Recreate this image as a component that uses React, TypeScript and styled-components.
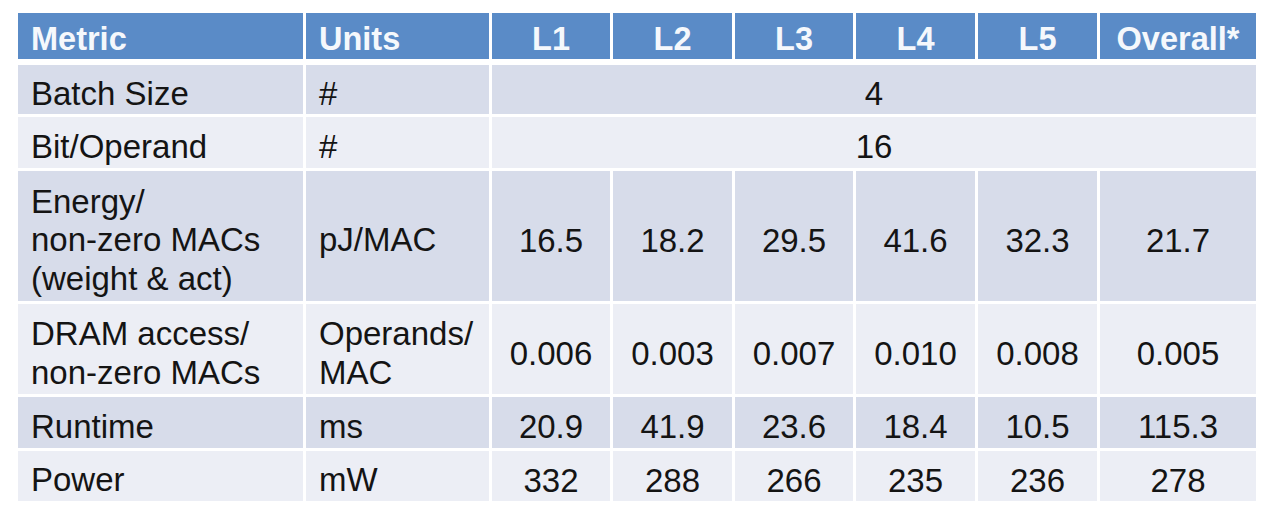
import React from 'react'
import styled, { createGlobalStyle } from 'styled-components'

const GlobalStyle = createGlobalStyle`
  html, body {
    margin: 0;
    padding: 0;
    background: #ffffff;
  }
  body {
    font-family: "Liberation Sans", Arial, sans-serif;
  }
`

type Row = {
  metric: string[]
  units: string[]
  values: string[]
  band: 'odd' | 'even'
}

const layers = ['L1', 'L2', 'L3', 'L4', 'L5', 'Overall*']

const rows: Row[] = [
  { metric: ['Batch Size'], units: ['#'], values: ['4'], band: 'odd' },
  { metric: ['Bit/Operand'], units: ['#'], values: ['16'], band: 'even' },
  {
    metric: ['Energy/', 'non-zero MACs', '(weight & act)'],
    units: ['pJ/MAC'],
    values: ['16.5', '18.2', '29.5', '41.6', '32.3', '21.7'],
    band: 'odd',
  },
  {
    metric: ['DRAM access/', 'non-zero MACs'],
    units: ['Operands/', 'MAC'],
    values: ['0.006', '0.003', '0.007', '0.010', '0.008', '0.005'],
    band: 'even',
  },
  {
    metric: ['Runtime'],
    units: ['ms'],
    values: ['20.9', '41.9', '23.6', '18.4', '10.5', '115.3'],
    band: 'odd',
  },
  {
    metric: ['Power'],
    units: ['mW'],
    values: ['332', '288', '266', '235', '236', '278'],
    band: 'even',
  },
]

export default function App() {
  return (
    <Page>
      <GlobalStyle />
      <Table>
        <HeadCell>Metric</HeadCell>
        <HeadCell>Units</HeadCell>
        {layers.map((l) => (
          <HeadCell key={l} $center>
            {l}
          </HeadCell>
        ))}
        {rows.map((r, i) => (
          <React.Fragment key={i}>
            <Cell $band={r.band}>
              <Lines>
                {r.metric.map((m) => (
                  <span key={m}>{m}</span>
                ))}
              </Lines>
            </Cell>
            <Cell $band={r.band}>
              <Lines>
                {r.units.map((u) => (
                  <span key={u}>{u}</span>
                ))}
              </Lines>
            </Cell>
            {r.values.length === 1 ? (
              <Cell $band={r.band} $center $span={6}>
                {r.values[0]}
              </Cell>
            ) : (
              r.values.map((v, j) => (
                <Cell key={j} $band={r.band} $center>
                  {v}
                </Cell>
              ))
            )}
          </React.Fragment>
        ))}
      </Table>
    </Page>
  )
}

const Page = styled.div`
  padding: 13px 0 0 18px;
  width: 1280px;
  height: 511px;
  box-sizing: border-box;
  background: #ffffff;
`

const Table = styled.div`
  display: grid;
  grid-template-columns: 285px 183px 118px 119px 118px 119px 119px 156px;
  grid-template-rows: 49px 49px 51px 130px 90px 51px 50px;
  column-gap: 3px;
  row-gap: 3px;
  & > :nth-child(-n + 8) {
    margin-bottom: 3px;
  }
`

const HeadCell = styled.div<{ $center?: boolean }>`
  display: flex;
  align-items: center;
  justify-content: ${(p) => (p.$center ? 'center' : 'flex-start')};
  padding: 0 13px;
  padding-top: 7px;
  background: #5a8bc7;
  color: #f5f8fc;
  font-weight: 700;
  font-size: 32.5px;
`

const Cell = styled.div<{ $band: 'odd' | 'even'; $center?: boolean; $span?: number }>`
  display: flex;
  align-items: center;
  justify-content: ${(p) => (p.$center ? 'center' : 'flex-start')};
  padding: 0 13px;
  padding-top: 9px;
  background: ${(p) => (p.$band === 'odd' ? '#d7dcea' : '#eceef5')};
  color: #141414;
  font-size: 33px;
  grid-column: ${(p) => (p.$span ? `span ${p.$span}` : 'auto')};
`

const Lines = styled.div`
  display: flex;
  flex-direction: column;
  line-height: 38.5px;
`
